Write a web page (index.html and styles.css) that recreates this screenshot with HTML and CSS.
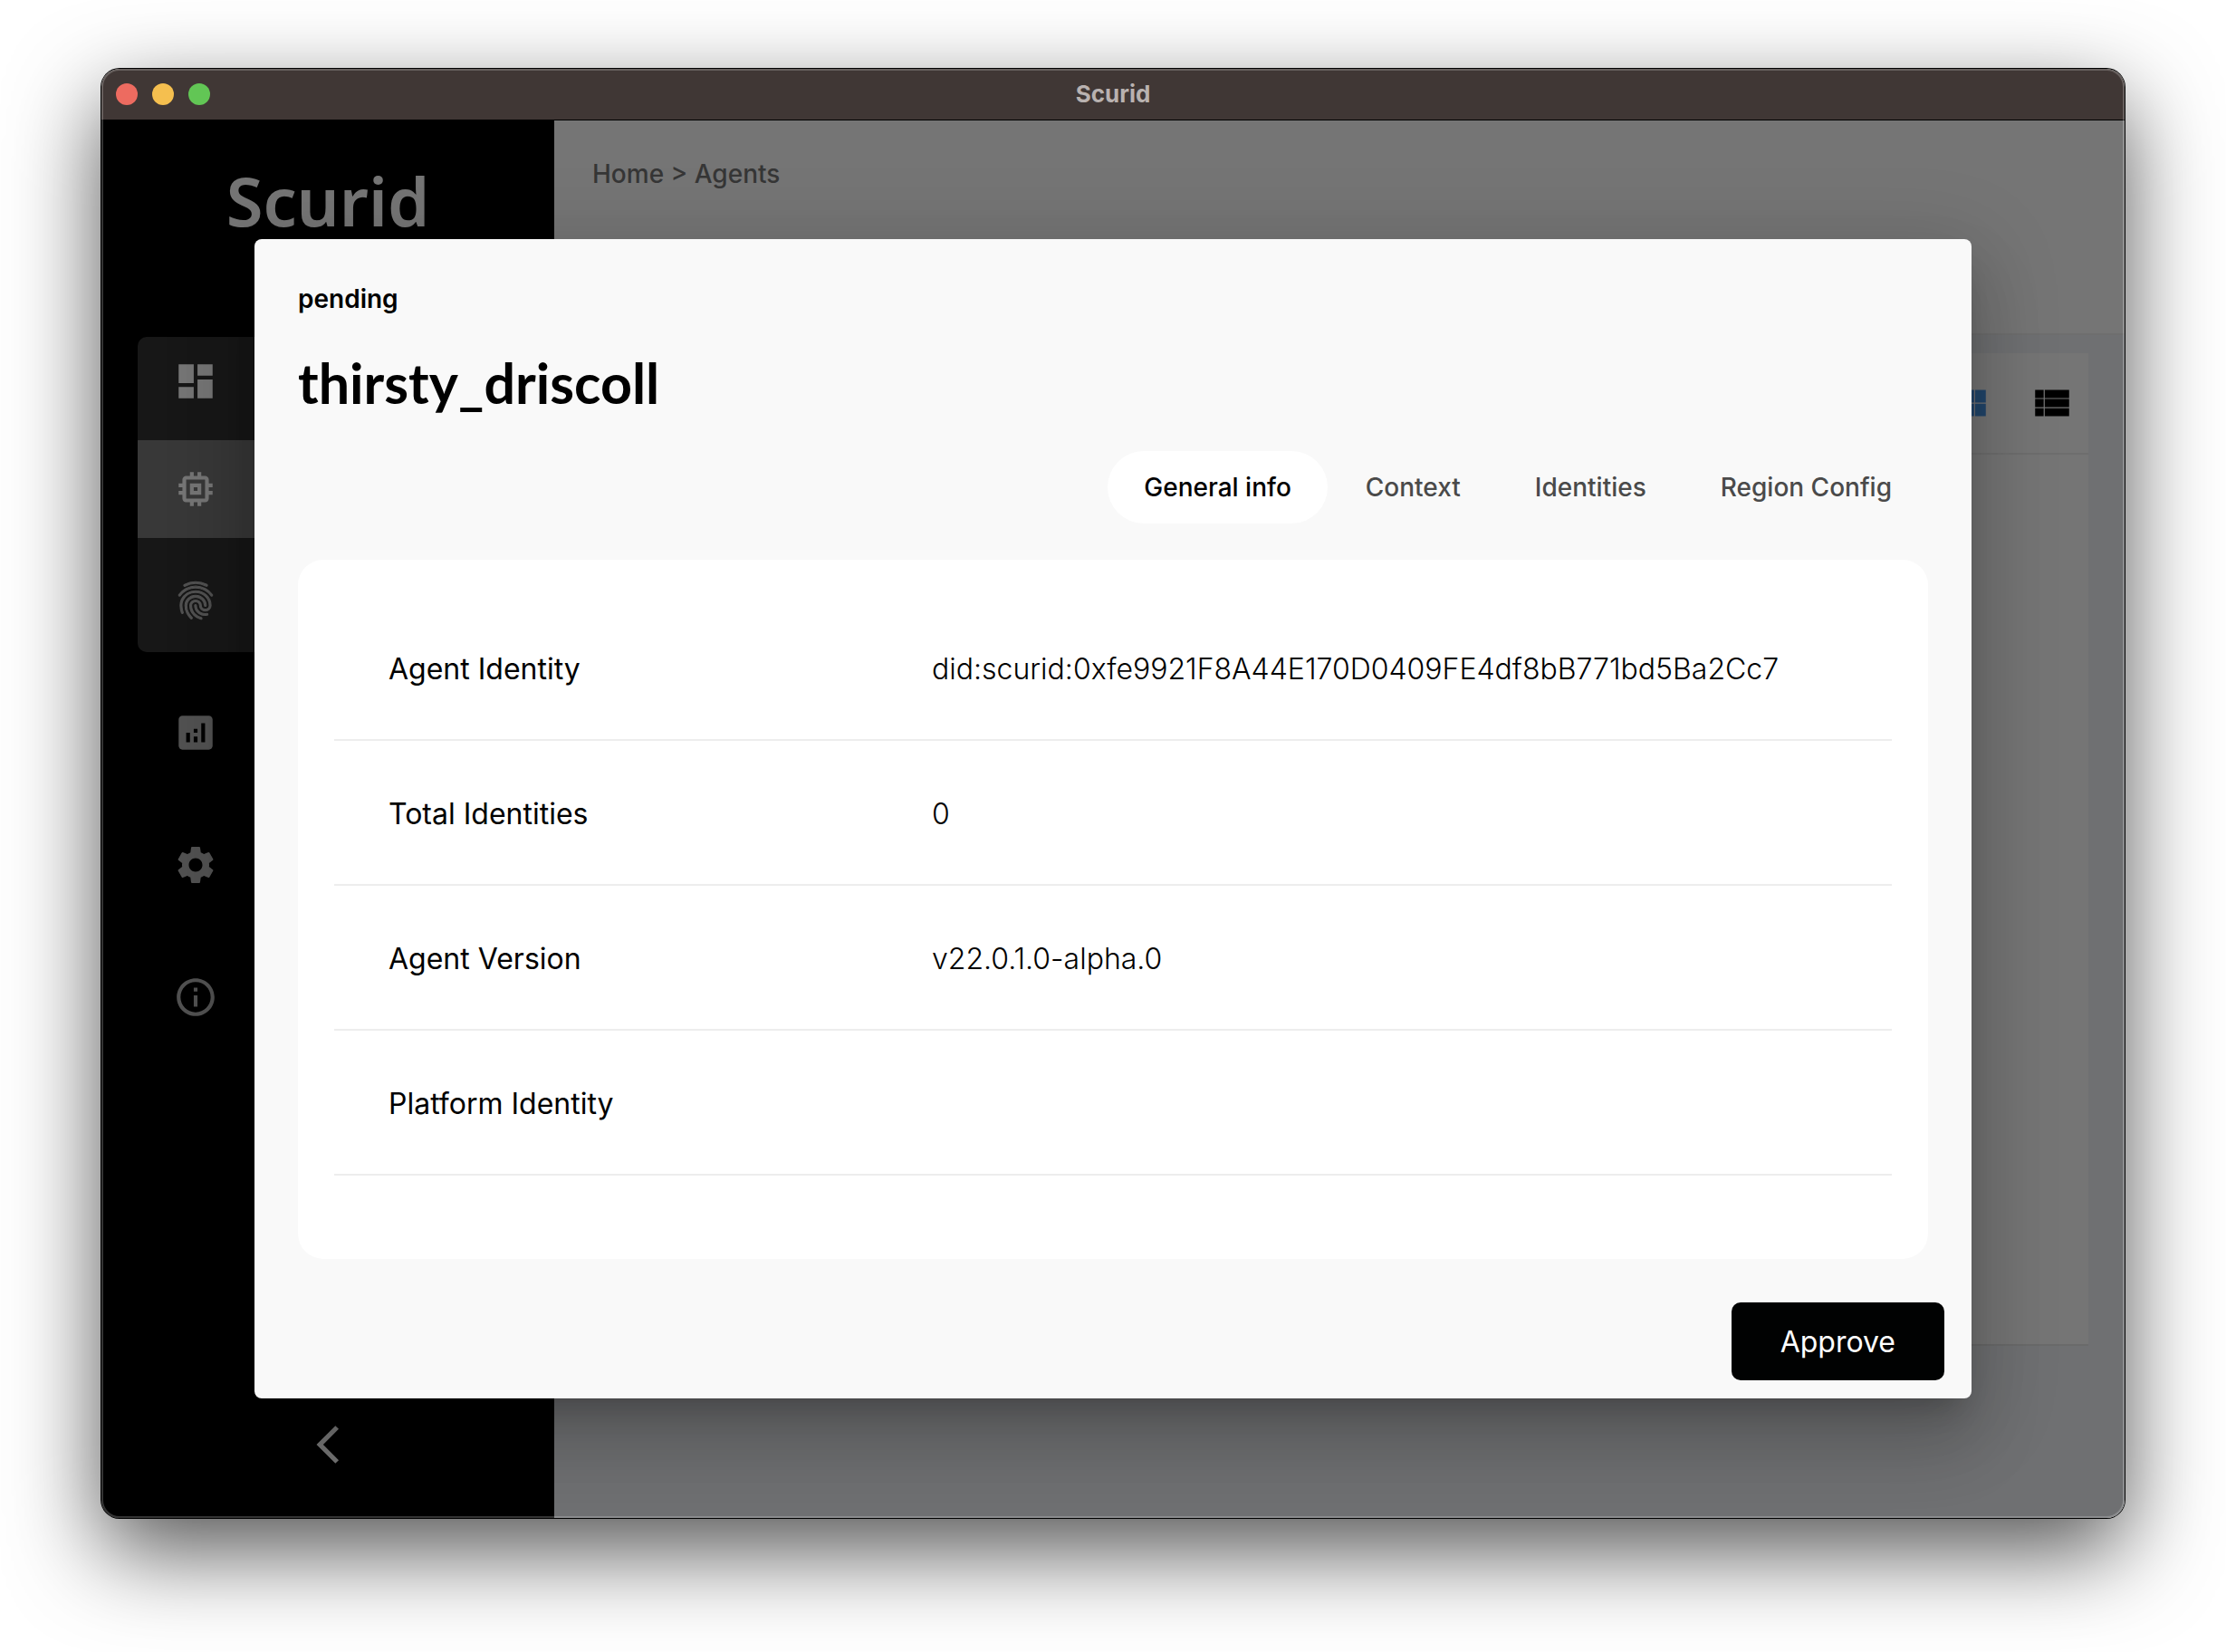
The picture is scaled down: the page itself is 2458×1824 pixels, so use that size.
FILE: index.html
```html
<!DOCTYPE html>
<html lang="en">
<head>
<meta charset="utf-8">
<title>Scurid</title>
<link rel="stylesheet" href="styles.css">
</head>
<body>
<div class="window">
  <header class="titlebar">
    <div class="lights">
      <button class="light light-close" aria-label="Close"></button>
      <button class="light light-minimize" aria-label="Minimize"></button>
      <button class="light light-zoom" aria-label="Zoom"></button>
    </div>
    <span class="window-title">Scurid</span>
  </header>

  <div class="app">
    <aside class="sidebar">
      <div class="logo">Scurid</div>
      <nav class="nav">
        <div class="nav-group">
          <a class="nav-link nav-first" href="#dashboard" aria-label="Dashboard">
            <svg class="icon" viewBox="0 0 24 24"><path d="M3 13h8V3H3v10zm0 8h8v-6H3v6zm10 0h8V11h-8v10zm0-18v6h8V3h-8z"/></svg>
          </a>
          <a class="nav-link nav-active" href="#agents" aria-label="Agents">
            <svg class="icon" viewBox="0 0 24 24"><path d="M15 9H9v6h6V9zm-2 4h-2v-2h2v2zm8-2V9h-2V7c0-1.1-.9-2-2-2h-2V3h-2v2h-2V3H9v2H7c-1.1 0-2 .9-2 2v2H3v2h2v2H3v2h2v2c0 1.1.9 2 2 2h2v2h2v-2h2v2h2v-2h2c1.1 0 2-.9 2-2v-2h2v-2h-2v-2h2zm-4 6H7V7h10v10z"/></svg>
          </a>
          <a class="nav-link nav-last nav-dim" href="#identities" aria-label="Identities">
            <svg class="icon icon-print" viewBox="0 0 24 24"><path d="M17.81 4.47c-.08 0-.16-.02-.23-.06C15.66 3.42 14 3 12.01 3c-1.98 0-3.86.47-5.57 1.41-.24.13-.54.04-.68-.2-.13-.24-.04-.55.2-.68C7.82 2.52 9.86 2 12.01 2c2.13 0 3.99.47 6.03 1.52.25.13.34.43.21.67-.09.18-.26.28-.44.28zM3.5 9.72c-.1 0-.2-.03-.29-.09-.23-.16-.28-.47-.12-.7.99-1.4 2.25-2.5 3.75-3.27C9.98 4.04 14 4.03 17.15 5.65c1.5.77 2.76 1.86 3.75 3.25.16.22.11.54-.12.7-.23.16-.54.11-.7-.12-.9-1.26-2.04-2.25-3.39-2.94-2.87-1.47-6.54-1.47-9.4.01-1.36.7-2.5 1.7-3.4 2.96-.08.14-.23.21-.39.21zm6.25 12.07c-.13 0-.26-.05-.35-.15-.87-.87-1.34-1.43-2.01-2.64-.69-1.23-1.05-2.73-1.05-4.34 0-2.97 2.54-5.39 5.66-5.39s5.66 2.42 5.66 5.39c0 .28-.22.5-.5.5s-.5-.22-.5-.5c0-2.42-2.09-4.39-4.66-4.39-2.57 0-4.66 1.97-4.66 4.39 0 1.44.32 2.77.93 3.85.64 1.15 1.08 1.64 1.85 2.42.19.2.19.51 0 .71-.11.1-.24.15-.37.15zm7.17-1.85c-1.19 0-2.24-.3-3.1-.89-1.49-1.01-2.38-2.65-2.38-4.39 0-.28.22-.5.5-.5s.5.22.5.5c0 1.41.72 2.74 1.94 3.56.71.48 1.54.71 2.54.71.24 0 .64-.03 1.04-.1.27-.05.53.13.58.41.05.27-.13.53-.41.58-.57.11-1.07.12-1.21.12zM14.91 22c-.04 0-.09-.01-.13-.02-1.59-.44-2.63-1.03-3.72-2.1-1.4-1.39-2.17-3.24-2.17-5.22 0-1.62 1.38-2.94 3.08-2.94 1.7 0 3.08 1.32 3.08 2.94 0 1.07.93 1.94 2.08 1.94s2.08-.87 2.08-1.94c0-3.77-3.25-6.83-7.25-6.83-2.84 0-5.44 1.58-6.61 4.03-.39.81-.59 1.76-.59 2.8 0 .78.07 2.01.67 3.61.1.26-.03.55-.29.64-.26.1-.55-.04-.64-.29-.49-1.31-.73-2.61-.73-3.96 0-1.2.23-2.29.68-3.24 1.33-2.79 4.28-4.6 7.51-4.6 4.55 0 8.25 3.51 8.25 7.83 0 1.62-1.38 2.94-3.08 2.94s-3.08-1.32-3.08-2.94c0-1.07-.93-1.94-2.08-1.94s-2.08.87-2.08 1.94c0 1.71.66 3.31 1.87 4.51.95.94 1.86 1.46 3.27 1.85.27.07.42.35.35.61-.05.23-.26.38-.47.38z"/></svg>
          </a>
        </div>
        <a class="nav-link nav-single nav-dim" href="#analytics" aria-label="Analytics">
          <svg class="icon" viewBox="0 0 24 24"><path d="M19 3H5c-1.100 0-2 .9-2 2v14c0 1.100.9 2 2 2h14c1.100 0 2-.9 2-2V5c0-1.100-.9-2-2-2zM9 17H7v-5h2v5zm4 0h-2v-3h2v3zm0-5h-2v-2h2v2zm4 5h-2V7h2v10z"/></svg>
        </a>
        <a class="nav-link nav-single nav-dim" href="#settings" aria-label="Settings">
          <svg class="icon" viewBox="0 0 24 24"><path d="M19.14 12.94c.04-.3.06-.61.06-.94 0-.32-.02-.64-.07-.94l2.03-1.58c.18-.14.23-.41.12-.61l-1.92-3.32c-.12-.22-.37-.29-.59-.22l-2.39.96c-.5-.38-1.03-.7-1.62-.94l-.36-2.54c-.04-.24-.24-.41-.48-.41h-3.84c-.24 0-.43.17-.47.41l-.36 2.54c-.59.24-1.130.57-1.62.94l-2.39-.96c-.22-.08-.47 0-.59.22L2.74 8.870c-.12.21-.08.47.12.61l2.030 1.580c-.05.3-.09.630-.09.940s.02.640.070.940l-2.030 1.580c-.18.140-.23.410-.12.610l1.920 3.320c.120.220.370.290.59.220l2.390-.96c.5.380 1.030.7 1.620.940l.360 2.540c.05.240.240.410.480.410h3.840c.240 0 .440-.17.470-.41l.360-2.540c.590-.24 1.130-.56 1.620-.94l2.390.960c.220.080.470 0 .590-.22l1.920-3.320c.120-.22.070-.47-.12-.61l-2.010-1.580zM12 15.6c-1.980 0-3.600-1.620-3.600-3.600s1.620-3.600 3.600-3.600 3.600 1.620 3.600 3.600-1.620 3.600-3.600 3.600z"/></svg>
        </a>
        <a class="nav-link nav-single nav-dim" href="#about" aria-label="About">
          <svg class="icon" viewBox="0 0 24 24"><path d="M11 7h2v2h-2zm0 4h2v6h-2zm1-9C6.480 2 2 6.480 2 12s4.480 10 10 10 10-4.480 10-10S17.520 2 12 2zm0 18c-4.410 0-8-3.590-8-8s3.590-8 8-8 8 3.590 8 8-3.590 8-8 8z"/></svg>
        </a>
      </nav>
      <button class="collapse" aria-label="Collapse sidebar">
        <svg class="icon" viewBox="0 0 24 24"><path d="M17.770 3.770 16 2 6 12l10 10 1.770-1.770L9.540 12z"/></svg>
      </button>
    </aside>

    <main class="main">
      <header class="page-header">
        <nav class="breadcrumb"><a href="#home">Home</a> &gt; <a href="#agents">Agents</a></nav>
      </header>
      <section class="panel">
        <div class="toolbar">
          <button class="view-button view-grid" aria-label="Grid view">
            <svg class="icon" viewBox="0 0 24 24"><path d="M3 5h5.670v6.700H3zM9.170 5h5.660v6.700H9.170zM15.330 5H21v6.700h-5.670zM3 12.300h5.670V19H3zM9.170 12.300h5.660V19H9.170zM15.330 12.300H21V19h-5.670z"/></svg>
          </button>
          <button class="view-button" aria-label="List view">
            <svg class="icon" viewBox="0 0 24 24"><path d="M3 5h4.500v4.300H3zM8.100 5H21v4.300H8.100zM3 9.850h4.500v4.300H3zM8.100 9.850H21v4.300H8.100zM3 14.700h4.500V19H3zM8.100 14.700H21V19H8.100z"/></svg>
          </button>
        </div>
      </section>
    </main>

    <div class="overlay">
      <section class="modal" role="dialog" aria-modal="true" aria-labelledby="agent-name">
        <p class="status">pending</p>
        <h1 class="agent-name" id="agent-name">thirsty_driscoll</h1>
        <div class="tabs" role="tablist">
          <button class="tab tab-active" role="tab" aria-selected="true">General info</button>
          <button class="tab" role="tab" aria-selected="false">Context</button>
          <button class="tab" role="tab" aria-selected="false">Identities</button>
          <button class="tab" role="tab" aria-selected="false">Region Config</button>
        </div>
        <div class="card">
          <table class="details">
            <tr><th scope="row">Agent Identity</th><td>did:scurid:0xfe9921F8A44E170D0409FE4df8bB771bd5Ba2Cc7</td></tr>
            <tr><th scope="row">Total Identities</th><td>0</td></tr>
            <tr><th scope="row">Agent Version</th><td>v22.0.1.0-alpha.0</td></tr>
            <tr><th scope="row">Platform Identity</th><td></td></tr>
          </table>
        </div>
        <div class="actions">
          <button class="approve">Approve</button>
        </div>
      </section>
    </div>
  </div>
</div>
</body>
</html>
```
FILE: styles.css
```css
* {
  box-sizing: border-box;
}

body {
  display: flex;
  min-height: 100vh;
  margin: 0;
  padding: 76px 112px 148px;
  background: #fff;
  color: #000;
  font-family: Inter, "Liberation Sans", sans-serif;
}

button {
  padding: 0;
  border: 0;
  background: none;
  color: inherit;
  font: inherit;
}

a {
  color: inherit;
  text-decoration: none;
}

/* Desktop window */
.window {
  position: relative;
  display: flex;
  flex: 1;
  flex-direction: column;
  overflow: hidden;
  border-radius: 20px;
  box-shadow: 0 0 0 1px #000, 0 36px 100px rgba(0, 0, 0, 0.68);
}

.window::after {
  position: absolute;
  inset: 0;
  border: 2px solid rgba(255, 255, 255, 0.2);
  border-radius: 20px;
  content: "";
  pointer-events: none;
}

.titlebar {
  display: grid;
  grid-template-columns: 1fr auto 1fr;
  align-items: center;
  height: 56px;
  padding: 0 16px;
  background: #403735;
}

.lights {
  display: flex;
  gap: 16px;
}

.light {
  width: 24px;
  height: 24px;
  border-radius: 50%;
}

.light-close { background: #ed6b60; }
.light-minimize { background: #f5bf4f; }
.light-zoom { background: #62c655; }

.window-title {
  padding-bottom: 2px;
  color: #b9b2b0;
  font-size: 26px;
  font-weight: 700;
}

.app {
  position: relative;
  display: flex;
  flex: 1;
  border-top: 1px solid #000;
}

.icon {
  display: block;
  width: 50px;
  height: 50px;
  fill: currentColor;
}

.icon-print {
  stroke: currentColor;
  stroke-width: 0.5;
}

/* Sidebar */
.sidebar {
  display: flex;
  flex: 0 0 500px;
  flex-direction: column;
  align-items: center;
  padding: 40px 40px 56px;
  background: #000;
  color: #fff;
}

.logo {
  height: 199px;
  font-family: "Noto Sans", "Open Sans", sans-serif;
  font-size: 74px;
  font-weight: 600;
  line-height: 97px;
}

.nav {
  align-self: stretch;
}

.nav-group {
  margin-bottom: 16px;
  overflow: hidden;
  border-radius: 10px;
  background: #343434;
}

.nav-link {
  display: flex;
  align-items: center;
  padding: 29px 39px;
}

.nav-first { padding-top: 24px; padding-bottom: 40px; }
.nav-last { padding-top: 44px; padding-bottom: 32px; }
.nav-single { padding-top: 48px; padding-bottom: 48px; }
.nav-active { background: #7a7a7a; }
.nav-dim { color: #b0b0b0; }

.collapse {
  margin-top: auto;
}

/* Page behind the dialog */
.main {
  display: flex;
  flex: 1;
  flex-direction: column;
  background: #f2f5f9;
}

.page-header {
  height: 237px;
  padding: 39px 42px;
  border-bottom: 2px solid #efefef;
  background: #fff;
}

.breadcrumb {
  color: #777;
  font-size: 28px;
  font-weight: 500;
  line-height: 40px;
}

.panel {
  flex: 1;
  margin: 20px 40px 190px;
  border-bottom: 2px solid #e6e6e6;
  background: #fff;
}

.toolbar {
  display: flex;
  align-items: center;
  justify-content: flex-end;
  gap: 42px;
  height: 112px;
  padding: 0 15px;
  border-bottom: 2px solid #efefef;
}

.view-grid {
  color: #4a98ea;
}

/* Agent dialog */
.overlay {
  position: absolute;
  inset: 0;
  display: flex;
  padding: 131px 169px 132px;
  background: rgba(0, 0, 0, 0.54);
}

.modal {
  display: flex;
  flex: 1;
  flex-direction: column;
  padding: 48px 48px 20px;
  border-radius: 8px;
  background: #f9f9f9;
  box-shadow: 0 22px 30px -14px rgba(0, 0, 0, 0.2), 0 48px 76px 6px rgba(0, 0, 0, 0.14), 0 18px 92px 16px rgba(0, 0, 0, 0.12);
}

.status {
  margin: 0;
  font-size: 28px;
  font-weight: 600;
  line-height: 36px;
}

.agent-name {
  margin: 36px 0;
  font-family: Lato, sans-serif;
  font-size: 61px;
  font-weight: 700;
  line-height: 78px;
}

.tabs {
  display: flex;
  justify-content: flex-end;
  gap: 2px;
}

.tab {
  height: 80px;
  padding: 0 40px;
  border-radius: 40px;
  color: #4a4a4a;
  font-size: 28px;
  font-weight: 500;
}

.tab-active {
  background: #fff;
  color: #000;
}

.card {
  margin-top: 40px;
  padding: 40px 40px 92px;
  border-radius: 28px;
  background: #fff;
}

.details {
  width: 100%;
  border-spacing: 0;
  table-layout: fixed;
  font-size: 32px;
}

.details th,
.details td {
  height: 160px;
  padding: 2px 0 0 60px;
  border-bottom: 2px solid #ededed;
  text-align: left;
}

.details th {
  width: 35%;
  font-weight: 400;
}

.details td {
  padding-left: 58px;
  font-weight: 300;
}

.actions {
  display: flex;
  justify-content: flex-end;
  margin: auto -18px 0 0;
}

.approve {
  height: 86px;
  padding: 0 54px;
  border-radius: 10px;
  background: #010202;
  color: #fff;
  font-size: 32px;
}
```
